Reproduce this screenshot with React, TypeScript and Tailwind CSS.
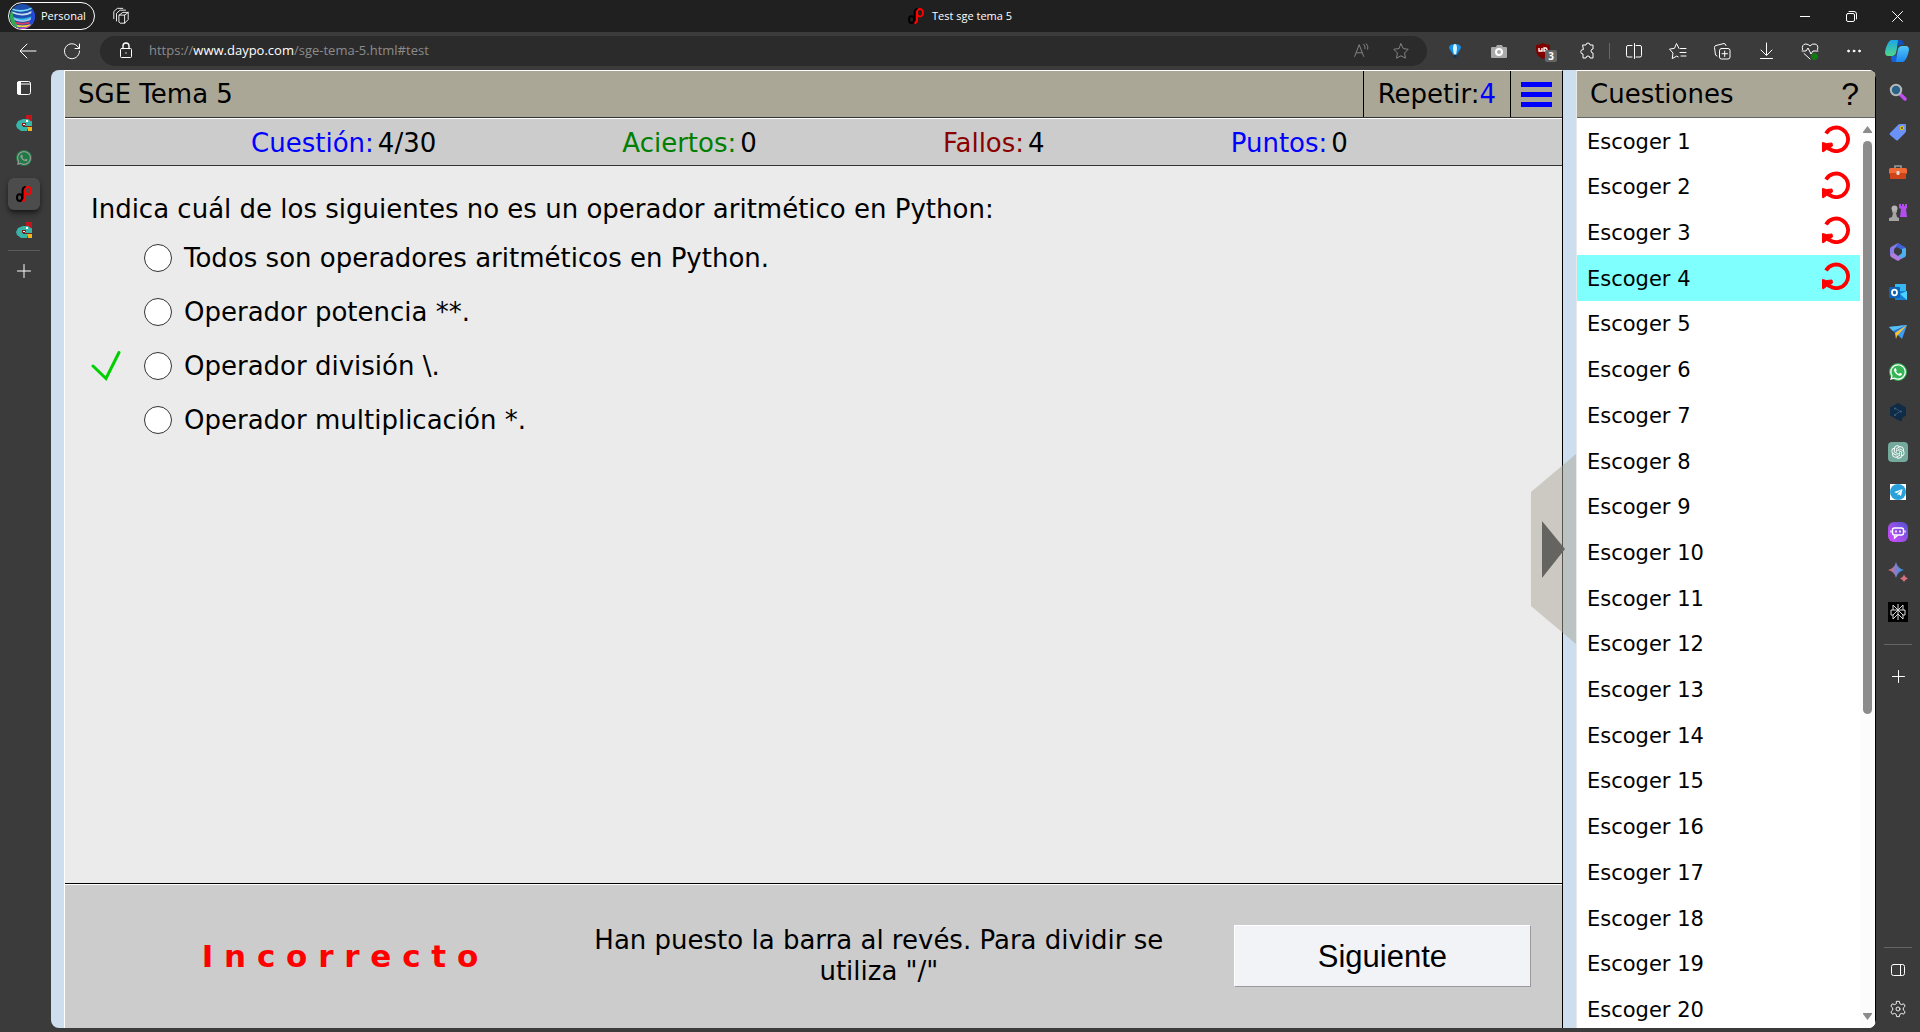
import type { ReactNode, SVGProps } from "react";
import { FaWhatsapp, FaTelegramPlane } from "react-icons/fa";
import { RiOpenaiFill } from "react-icons/ri";

type P = SVGProps<SVGSVGElement>;

function Line({ children, ...rest }: P) {
  return (
    <svg width="20" height="20" viewBox="0 0 20 20" fill="none" stroke="currentColor" strokeLinecap="round" strokeLinejoin="round" aria-hidden="true" {...rest}>
      {children}
    </svg>
  );
}

function DaypoIcon() {
  return (
    <svg width="16" height="16" viewBox="0 0 16 16" fill="none" aria-hidden="true">
      <ellipse cx="3.6" cy="11.6" rx="2.6" ry="3.4" stroke="#000" strokeWidth="2" />
      <path d="M6.6 15V4.5C6.6 2 8 1 10 1" stroke="#000" strokeWidth="2" />
      <ellipse cx="12" cy="4.8" rx="3" ry="3.8" stroke="#f00" strokeWidth="2" />
      <path d="M9 3.5v8C9 14 8 15 6.4 15.2" stroke="#f00" strokeWidth="2.2" />
    </svg>
  );
}

function CampusIcon() {
  return (
    <svg width="16" height="16" viewBox="0 0 16 16" aria-hidden="true">
      <path d="M10 0h6v6h-6z" fill="#c3161c" />
      <path d="M7 4h5l4 3v4H9V8H7v4h4v4H5l-4-3-1-3 2-4z" fill="#36b5a8" />
      <path d="M6 8h4v3H6z" fill="#8a1a14" />
      <path d="M7 9h2v1H7zM10 5h2v2h-2z" fill="#fff" />
      <path d="M9 10l7-4v5H9z" fill="#36b5a8" />
      <path d="M11 12h5v4h-4z" fill="#f2b61c" />
      <path d="M10 11h6v1h-6z" fill="#7a2418" />
    </svg>
  );
}

function Redo() {
  return (
    <svg width="28" height="28" viewBox="0 0 28 28" fill="none" aria-hidden="true">
      <path d="M4 8.500A11.800 11.800 0 1 1 7.500 24" stroke="#f00" strokeWidth="3.800" />
      <path d="M.5 17.500l4 1 5.500-.5.500 3-3 2 1 2.500-4-1-3.500 2.500-.5-1z" fill="#f00" stroke="#f00" strokeLinejoin="round" />
    </svg>
  );
}

function IconButton({ label, children, className = "" }: { label: string; children: ReactNode; className?: string }) {
  return (
    <button type="button" aria-label={label} className={`flex shrink-0 items-center justify-center ${className}`}>
      {children}
    </button>
  );
}

function TitleBar() {
  return (
    <header className="grid h-8 shrink-0 grid-cols-[1fr_auto_1fr] items-center bg-[#202020] text-[11px]">
      <div className="flex items-center gap-4 pl-2">
        <button type="button" className="flex h-7 w-[87px] items-center gap-1.5 rounded-full border border-white pl-px">
          <svg width="25" height="25" viewBox="0 0 24 24" aria-hidden="true">
            <clipPath id="avatar"><circle cx="12" cy="12" r="12" /></clipPath>
            <g clipPath="url(#avatar)" fill="none" strokeWidth="1.600">
              <rect width="24" height="24" fill="#1d4fae" />
              <path d="M0 4q12 6 24-2" stroke="#7de0f4" />
              <path d="M2 8q11 5 20-1" stroke="#c9dcf0" />
              <path d="M0 12q12 6 24-1" stroke="#31b5e8" />
              <path d="M3 14q9 5 18 0" stroke="#a9c9e8" />
              <path d="M1 16q11 6 22 0" stroke="#d83a64" />
              <path d="M2 19q10 5 20 0" stroke="#f0d63c" />
              <path d="M4 22q8 4 16-1" stroke="#d44cc0" />
              <path d="M0 6q1 9 6 18" stroke="#2fae4e" strokeWidth="4" />
              <path d="M22 4q2 8-2 16" stroke="#2448d8" strokeWidth="4" />
            </g>
          </svg>
          Personal
        </button>
        <IconButton label="Áreas de trabajo" className="size-5">
          <Line width="18" height="18">
            <path d="M8 9l4-3 6 0v8l-4 4H9l-1-1zM8 9h6l4-3M14 9v9" />
            <path d="M5 15.500V7l4-3.500h6M2 13V5l4-3.500h6" />
          </Line>
        </IconButton>
      </div>
      <div className="flex items-center gap-2">
        <DaypoIcon />
        <h1>Test sge tema 5</h1>
      </div>
      <div className="flex justify-end">
        <IconButton label="Minimizar" className="h-8 w-[46px]">
          <Line width="10" height="10" viewBox="0 0 10 10" strokeLinecap="butt"><path d="M0 5.500h10" /></Line>
        </IconButton>
        <IconButton label="Restaurar" className="h-8 w-[46px]">
          <Line width="11" height="11" viewBox="0 0 11 11"><rect x=".5" y="2.500" width="8" height="8" rx="1.500" /><path d="M3 .5h5a2.500 2.500 0 0 1 2.500 2.500v5" /></Line>
        </IconButton>
        <IconButton label="Cerrar" className="h-8 w-[46px]">
          <Line width="11" height="11" viewBox="0 0 11 11"><path d="M.5 .5l10 10M10.500 .5l-10 10" /></Line>
        </IconButton>
      </div>
    </header>
  );
}

function Toolbar() {
  return (
    <nav aria-label="Navegador" className="flex h-[38px] shrink-0 items-center">
      <div className="flex w-[100px] shrink-0 items-center pl-1.5">
        <IconButton label="Atrás" className="w-11">
          <Line><path d="M18 10H2.500M9 3l-7 7 7 7" /></Line>
        </IconButton>
        <IconButton label="Actualizar" className="w-11">
          <Line><path d="M17 7.500A7.500 7.500 0 1 0 17.500 10M17.500 3v4.500H13" /></Line>
        </IconButton>
      </div>
      <div className="flex h-[30px] min-w-0 flex-1 items-center rounded-full bg-[#2b2b2b] pl-4">
        <IconButton label="Información del sitio" className="w-5">
          <Line><rect x="4.500" y="7.500" width="11" height="9" rx="1" /><path d="M7 7.500V5a3 3 0 0 1 6 0v2.500M10 12h.01" strokeWidth="1.400" /></Line>
        </IconButton>
        <a href="#test" className="ml-[13px] flex-1 truncate text-[13px] text-[#8c8c8c]">
          https://<span className="text-white">www.daypo.com</span>/sge-tema-5.html#test
        </a>
        <IconButton label="Leer en voz alta" className="w-10 text-[#8c8c8c]">
          <Line width="18" height="18"><path d="M3 16L8 3l5 13M5 12h6M13 2.500q2 2 1.500 5M16 2q2.500 3 1.500 6" /></Line>
        </IconButton>
        <IconButton label="Añadir a favoritos" className="mr-1.5 w-10 text-[#8c8c8c]">
          <Line width="18" height="18"><path d="M10 2l2.500 5.300 5.500.8-4 4.100.9 5.800-4.900-2.700L5.100 18l.9-5.800L2 8.100l5.500-.8z" /></Line>
        </IconButton>
      </div>
      <div className="ml-1.5 flex shrink-0 items-center">
        <IconButton label="Extensión globo" className="w-11">
          <svg width="18" height="18" viewBox="0 0 18 18" aria-hidden="true"><path d="M3 6q0-4 6-4t6 4l-5 8H8z" fill="#158fe8" /><path d="M7 7q0-5 2-5t2 5l-1 6H8z" fill="#d4f4ff" /><path d="M7.500 12.500h3V16h-3z" fill="#153450" /></svg>
        </IconButton>
        <IconButton label="Captura" className="w-11">
          <svg width="16" height="16" viewBox="0 0 16 16" aria-hidden="true"><path d="M0 5q0-1 1-1h4l1-2h5l1 2h3q1 0 1 1v9q0 1-1 1H1q-1 0-1-1z" fill="#aaa" /><circle cx="8" cy="9" r="3" fill="none" stroke="#fff" strokeWidth="2" /></svg>
        </IconButton>
        <IconButton label="uBlock" className="relative w-11">
          <svg width="16" height="18" viewBox="0 0 16 18" aria-hidden="true"><path d="M1 3q4 0 7-2 3 2 7 2v5q0 6-7 9-7-3-7-9z" fill="#800000" /><path d="M4 6v3h3V6M9 9V6h2q2 1.500 0 3z" stroke="#fff" strokeWidth="1.400" fill="none" /></svg>
          <span className="absolute top-2 left-6 flex h-3 w-3 items-center justify-center rounded-xs bg-[#666] text-[10px] font-bold text-white">3</span>
        </IconButton>
        <IconButton label="Extensiones" className="w-11">
          <Line><path d="M6 4h3a2 2 0 1 1 4 0h3v4a2 2 0 0 0 0 4v5h-3a2 2 0 0 0-4 0H6v-4a2.200 2.200 0 1 1 0-4.500z" /></Line>
        </IconButton>
        <span className="mr-0.5 h-4 w-px bg-[#666]" />
        <IconButton label="Pantalla dividida" className="w-11">
          <Line><path d="M8 4.500H4a1.500 1.500 0 0 0-1.500 1.500v8.500A1.500 1.500 0 0 0 4 16h4M12 4.500h4a1.500 1.500 0 0 1 1.500 1.500v8.500A1.500 1.500 0 0 1 16 16h-4M10.500 2.500v15" /></Line>
        </IconButton>
        <IconButton label="Favoritos" className="w-11">
          <Line><path d="M12.500 7.500h5.500M12 11.500h6M13 15h5M11 7.500L8.500 2.500 6.500 7.300l-5 .8 3.500 4-.8 5.500 4.500-2.500 1.500.8" /></Line>
        </IconButton>
        <IconButton label="Colecciones" className="w-11">
          <Line><rect x="7.500" y="7.500" width="10.500" height="10.500" rx="2" /><path d="M12.700 10v5.500M10 12.700h5.500M5 15l-1.500-1L2.500 6.500a2 2 0 0 1 1.500-2L12 2.500q1.500 0 2 2" /></Line>
        </IconButton>
        <IconButton label="Descargas" className="w-11">
          <Line><path d="M10.500 2v12M5 9l5.500 5.500L16 9M4.500 17.500h12" /></Line>
        </IconButton>
        <IconButton label="Rendimiento" className="w-11">
          <Line><path d="M2.500 8.500q-1-5 3-5.500 3 0 4.500 2 2-2.500 5-2 4 1 2.500 5.500M2 10h4l2-3 3 6 2-3h5M4 12.500l6 5.500" /><circle cx="14.500" cy="15.500" r="3" fill="#107c10" stroke="#107c10" /></Line>
        </IconButton>
        <IconButton label="Configuración y más" className="w-11">
          <Line fill="currentColor"><circle cx="4.500" cy="10" r=".9" /><circle cx="10" cy="10" r=".9" /><circle cx="15.500" cy="10" r=".9" /></Line>
        </IconButton>
        <IconButton label="Copilot" className="w-11 pr-0.5">
          <svg width="24" height="24" viewBox="0 0 24 24" aria-hidden="true">
            <defs>
              <linearGradient id="cpA" x1="0" y1="0" x2="0" y2="1"><stop stopColor="#1aa7e8" /><stop offset="1" stopColor="#4fd68a" /></linearGradient>
              <linearGradient id="cpB" x1="0" y1="0" x2="0" y2="1"><stop stopColor="#52c8f5" /><stop offset="1" stopColor="#1a86f0" /></linearGradient>
            </defs>
            <path d="M6 1h9q-2 2-3 8l-1 5q-1 3-4 3H3q-3 0-3-4Q2 3 6 1z" fill="url(#cpA)" />
            <path d="M13 1h3q2 0 3 5h-4q-2 0-3 3z" fill="#1250b8" />
            <path d="M18 23H9q2-2 3-8l1-5q1-3 4-3h4q3 0 3 4-2 10-6 12z" fill="url(#cpB)" />
            <path d="M11 23H8q-2 0-2-6h2q3 0 4-3z" fill="#1660d8" />
          </svg>
        </IconButton>
      </div>
    </nav>
  );
}

function LeftTabs() {
  return (
    <aside aria-label="Pestañas" className="flex w-[51px] shrink-0 flex-col pl-2">
      <IconButton label="Acciones de pestaña" className="h-9 w-8">
        <Line width="16" height="16" viewBox="0 0 16 16"><rect x="1.500" y="1.500" width="13" height="13" rx="2" /><path d="M1.500 4h13" /><path d="M2 2h2.500v12H2z" fill="currentColor" /></Line>
      </IconButton>
      <IconButton label="Campus" className="h-[34px] w-8"><CampusIcon /></IconButton>
      <IconButton label="WhatsApp" className="h-9 w-8">
        <span className="flex size-4 items-center justify-center rounded-full bg-[#1f7a43] text-[#9a9a9a]"><FaWhatsapp size={16} /></span>
      </IconButton>
      <IconButton label="Test sge tema 5" className="my-0.5 size-8 rounded-md bg-[#4c4c4c] shadow-md shadow-black/50"><DaypoIcon /></IconButton>
      <IconButton label="Campus" className="h-9 w-8"><CampusIcon /></IconButton>
      <hr className="mt-0.5 w-8 border-[#5c5c5c]" />
      <IconButton label="Nueva pestaña" className="h-10 w-8">
        <Line width="14" height="14" viewBox="0 0 14 14"><path d="M7 .5v13M.5 7h13" /></Line>
      </IconButton>
    </aside>
  );
}

function Svg({ children }: { children: ReactNode }) {
  return <svg width="18" height="18" viewBox="0 0 18 18" fill="none" aria-hidden="true">{children}</svg>;
}

const sideApps: { label: string; icon: ReactNode }[] = [
  { label: "Buscar", icon: <Svg><path d="M11 11l5 5" stroke="#c04df0" strokeWidth="3.500" strokeLinecap="round" /><circle cx="7" cy="7" r="5.200" fill="#28648a" stroke="#b8b8b8" strokeWidth="2" /></Svg> },
  { label: "Compras", icon: <Svg><path d="M1 10L9 2q1-1 2-1h5q1 0 1 1v6q0 1-1 2l-7 7q-1 1-2 0l-6-5q-1-1 0-2z" fill="#6a92f8" /><circle cx="13" cy="5" r="1.600" fill="#345" stroke="#e8c400" strokeWidth="1.300" /></Svg> },
  { label: "Herramientas", icon: <Svg><path d="M6 5V3h6v2" stroke="#9a9a9a" strokeWidth="1.600" /><rect y="5" width="18" height="6" rx="1.500" fill="#f06a35" /><path d="M1 10h16v5q0 1-1 1H2q-1 0-1-1z" fill="#cf4419" /><rect x="7.500" y="8" width="3" height="4" rx="1" fill="#ddd" /></Svg> },
  { label: "Juegos", icon: <Svg><path d="M10 1h2v2h1V1h2v2h1V1h2v4l-1 1 1 8h-7l1-8-2-1z" fill="#b44df0" /><circle cx="5.500" cy="5.500" r="3" fill="#b4b4b4" /><path d="M3 8h5v1L7 10l1 4 2 1v3H0v-3l3-1 1-4-1-1z" fill="#a4a4a4" /></Svg> },
  { label: "Microsoft 365", icon: <Svg><path d="M9 0L2 4Q1 5 1 6v6l4 1V7q0-1 1-2l5-3z" fill="#8a7ce8" /><path d="M9 0l7 4q1 1 1 2v4l-4-3-5-3-2 1z" fill="#3f62d8" /><path d="M17 6v6q0 1-1 2l-4 2-3-3 3-2q1-1 1-2V6l3-1z" fill="#4ab0f0" /><path d="M1 12l4-2 4 3 4 2-3 2.500q-1 .5-2 0l-6-3.500z" fill="#b07ce0" /></Svg> },
  { label: "Outlook", icon: <Svg><path d="M6 1h11v8H6z" fill="#35b8f1" /><path d="M6 8h12v9H6z" fill="#1680d4" /><path d="M11 11l7-3v9z" fill="#50d0ff" /><rect x="0" y="4" width="11" height="11" rx="1" fill="#0a63b8" /><ellipse cx="5.500" cy="9.500" rx="2.500" ry="2.800" stroke="#fff" strokeWidth="1.800" /></Svg> },
  { label: "Drop", icon: <Svg><path d="M0 4l18-2-5 14-4-4z" fill="#3d9cf5" /><path d="M0 4l18-2L6 10z" fill="#2d74d8" /><path d="M6 10L18 2 8 13l-1 3z" fill="#ffc52e" /><path d="M0 4l4 4L18 2z" fill="#58c0f0" /></Svg> },
  { label: "WhatsApp", icon: <span className="flex size-[18px] items-center justify-center rounded-full bg-[#34b455] text-white"><FaWhatsapp size={18} /></span> },
  { label: "DeepL", icon: <Svg><path d="M9 0l8 4.500v8L13 15v4l-4-2-8-4.500v-8z" fill="#0f2b46" /><path d="M6 5l5 3.500L6 12" stroke="#2f5878" /><circle cx="6" cy="5.500" r="1" fill="#3b6484" /><circle cx="12" cy="8.500" r="1" fill="#3b6484" /><circle cx="6" cy="12" r="1" fill="#3b6484" /></Svg> },
  { label: "ChatGPT", icon: <span className="flex size-5 items-center justify-center rounded-sm bg-[#74aa9c] text-white"><RiOpenaiFill size={16} /></span> },
  { label: "Telegram", icon: <span className="flex size-4 bg-white"><span className="flex size-4 items-center justify-center rounded-full bg-[#2aa1da] text-white"><FaTelegramPlane size={9} /></span></span> },
  { label: "Poe", icon: <span className="flex size-5 items-center justify-center rounded-md bg-linear-to-bl from-[#4a4fd0] to-[#d845ff]"><Svg><rect x="3.500" y="5" width="11" height="7" rx="2" stroke="#fff" strokeWidth="1.400" /><path d="M2 7.500v2M16 7.500v2M5.500 12.500v2.500l3-2.500" stroke="#fff" strokeWidth="1.300" /><path d="M7 7.500v2M11 7.500v2" stroke="#fff" strokeWidth="1.600" /></Svg></span> },
  { label: "Gemini", icon: <svg width="20" height="20" viewBox="0 0 20 20" aria-hidden="true"><defs><linearGradient id="gem"><stop stopColor="#f0705c" /><stop offset=".45" stopColor="#8c7cc8" /><stop offset="1" stopColor="#1c9cf0" /></linearGradient></defs><path d="M8 0q1.500 6.500 8 8-6.500 1.500-8 8-1.500-6.500-8-8 6.500-1.500 8-8z" fill="url(#gem)" /><path d="M16 12.500q1 3 4 4-3 1-4 3.500-1-2.500-4-3.500 3-1 4-4z" fill="#d8707c" /></svg> },
  { label: "Perplexity", icon: <span className="flex size-5 items-center justify-center bg-black"><Svg><path d="M9 1v16M4 2l5 5 5-5v5M4 2v5M9 7l-5 5v4l5-5 5 5v-4L9 7M4 12H2V7h14v5h-2" stroke="#d8d8d8" /></Svg></span> },
];

function RightTools() {
  return (
    <aside aria-label="Barra lateral" className="flex w-11 shrink-0 flex-col items-center pt-0.5">
      {sideApps.map((a) => (
        <IconButton key={a.label} label={a.label} className="h-10 w-11">{a.icon}</IconButton>
      ))}
      <hr className="mt-3 w-7 border-[#666]" />
      <IconButton label="Personalizar" className="mt-[11px] h-10 w-11">
        <Line width="13" height="13" viewBox="0 0 13 13"><path d="M6.500 .5v12M.5 6.500h12" /></Line>
      </IconButton>
      <hr className="mt-auto w-7 border-[#666]" />
      <IconButton label="Panel" className="mt-0.5 h-10 w-11">
        <Line width="14" height="12" viewBox="0 0 14 12"><rect x=".5" y=".5" width="13" height="11" rx="2" /><path d="M9.500 .5v11" /></Line>
      </IconButton>
      <IconButton label="Configuración" className="h-[38px] w-11">
        <Line width="18" height="18"><path d="M8.500 1.500h3l.6 2.700 1.600.9 2.700-.8 1.500 2.600-2 1.900v2.400l2 1.900-1.500 2.600-2.700-.8-1.600.9-.6 2.700h-3l-.6-2.700-1.600-.9-2.700.8-1.500-2.600 2-1.900V8.800l-2-1.900 1.500-2.600 2.700.8 1.600-.9z" /><circle cx="10" cy="10" r="2.200" /></Line>
      </IconButton>
    </aside>
  );
}

const stats = [
  { label: "Cuestión:", value: "4/30", color: "text-[#0000ff]" },
  { label: "Aciertos:", value: "0", color: "text-[#008000]" },
  { label: "Fallos:", value: "4", color: "text-[#8b0000]" },
  { label: "Puntos:", value: "0", color: "text-[#0000ff]" },
];

const options = [
  { text: "Todos son operadores aritméticos en Python.", correct: false },
  { text: "Operador potencia **.", correct: false },
  { text: "Operador división \\.", correct: true },
  { text: "Operador multiplicación *.", correct: false },
];

function Quiz() {
  return (
    <main className="flex min-w-0 flex-1 flex-col border-t border-l border-r border-t-white border-l-white border-r-black bg-[#ebebeb] text-[26px] leading-[31px]">
      <div className="flex h-[47px] shrink-0 items-stretch border-b border-[#333] bg-[#aba797]">
        <h2 className="flex flex-1 items-center pl-[13px]">SGE Tema 5</h2>
        <div className="flex items-center border-l border-black px-3.5">
          Repetir:<span className="text-[#0000ff]">4</span>
        </div>
        <button type="button" aria-label="Menú" className="flex w-[52px] flex-col items-center justify-center gap-[5px] border-l border-black">
          <span className="h-[5px] w-[31px] bg-[#0000ff]" />
          <span className="h-[5px] w-[31px] bg-[#0000ff]" />
          <span className="h-[5px] w-[31px] bg-[#0000ff]" />
        </button>
      </div>
      <dl className="flex h-12 shrink-0 items-center justify-evenly border-t border-b border-t-white border-b-[#333] bg-[#cccccc] pt-0.5 pr-7">
        {stats.map((s) => (
          <div key={s.label} className="flex gap-1">
            <dt className={s.color}>{s.label}</dt>
            <dd>{s.value}</dd>
          </div>
        ))}
      </dl>
      <fieldset className="min-h-0 flex-1 overflow-hidden pt-7 pl-[26px]">
        <legend className="float-left w-full pb-1.5">Indica cuál de los siguientes no es un operador aritmético en Python:</legend>
        {options.map((o, i) => (
          <div key={o.text} className="clear-both flex h-[54px] items-center">
            <span className="w-[53px] shrink-0">
              {o.correct && (
                <svg width="31" height="31" viewBox="0 0 31 31" fill="none" role="img" aria-label="Correcta">
                  <path d="M2 15L15 27.500 28 1.500" stroke="#00d000" strokeWidth="3" strokeLinecap="round" />
                </svg>
              )}
            </span>
            <input id={`opt${i}`} type="radio" name="respuesta" className="size-7 shrink-0 appearance-none rounded-full border border-[#333] bg-white checked:bg-blue-600" />
            <label htmlFor={`opt${i}`} className="pl-3">{o.text}</label>
          </div>
        ))}
      </fieldset>
      <footer className="grid h-[145px] shrink-0 grid-cols-[33fr_43fr_24fr] items-center border-t border-black bg-[#cccccc] shadow-[inset_0_1px_0_#fff]">
        <strong className="pl-14 text-center text-[31px] leading-9 font-bold text-[#ff0000]">I n c o r r e c t o</strong>
        <p className="pr-8 pl-7 text-center">Han puesto la barra al revés. Para dividir se utiliza "/"</p>
        <div className="flex justify-center">
          <button type="button" className="h-[62px] w-[297px] border border-white border-r-[#999] border-b-[#999] bg-[#f2f3f7] font-['Liberation_Sans',sans-serif] text-[31px]">
            Siguiente
          </button>
        </div>
      </footer>
    </main>
  );
}

function Questions() {
  const items = Array.from({ length: 20 }, (_, i) => i + 1);
  return (
    <section className="flex w-[300px] shrink-0 flex-col border-t border-l border-r border-t-white border-l-[#e8e8e8] border-r-black bg-white">
      <div className="flex h-[47px] shrink-0 items-center justify-between border-b border-[#666] bg-[#aba797] pr-4 pl-[13px] text-[26px]">
        <h2>Cuestiones</h2>
        <button type="button" aria-label="Ayuda" className="font-['Liberation_Sans',sans-serif] text-[32px]">?</button>
      </div>
      <div className="flex min-h-0 flex-1 overflow-hidden">
        <ul className="flex h-[calc(100%+4px)] flex-1 flex-col text-[21px]">
          {items.map((n) => (
            <li key={n} className="min-h-0 flex-1">
              <button
                type="button"
                className={n === 4 ? "flex h-full w-full items-center justify-between bg-[#80ffff] pr-2.5 pl-2.5 text-left" : "flex h-full w-full items-center justify-between pr-2.5 pl-2.5 text-left"}
              >
                <span className="pt-[3px]">Escoger {n}</span>
                {n <= 4 && <span className="pb-1"><Redo /></span>}
              </button>
            </li>
          ))}
        </ul>
        <div aria-hidden="true" className="flex w-[15px] flex-col items-center bg-[#fcfcfc] pt-2">
          <svg width="9" height="7" viewBox="0 0 9 7"><path d="M4.500 0L9 6v1H0V6z" fill="#8b8b8b" /></svg>
          <span className="mt-2 h-[63.500%] w-[9px] rounded-full bg-[#8b8b8b]" />
          <svg className="mt-auto mb-2" width="9" height="7" viewBox="0 0 9 7"><path d="M4.500 7L9 1V0H0v1z" fill="#8b8b8b" /></svg>
        </div>
      </div>
    </section>
  );
}

export default function App() {
  return (
    <div className="flex h-screen flex-col overflow-hidden bg-[#3b3b3b] font-['Open_Sans',sans-serif] text-white">
      <TitleBar />
      <Toolbar />
      <div className="flex min-h-0 flex-1 pb-1">
        <LeftTabs />
        <div className="relative flex min-w-0 flex-1 overflow-hidden rounded-lg bg-[#cddeee] pl-[13px] font-['DejaVu_Sans',Verdana,sans-serif] text-black">
          <Quiz />
          <div className="relative w-[13px] shrink-0">
            <button type="button" aria-label="Ocultar cuestiones" className="absolute top-1/2 right-0 -translate-y-1/2">
              <svg width="45" height="190" viewBox="0 0 45 190" aria-hidden="true">
                <path d="M45 0v190L0 152V38z" fill="#aba797" fillOpacity=".5" />
                <path d="M11 67l23 28-23 29z" fill="#666460" />
              </svg>
            </button>
          </div>
          <Questions />
        </div>
        <RightTools />
      </div>
    </div>
  );
}
